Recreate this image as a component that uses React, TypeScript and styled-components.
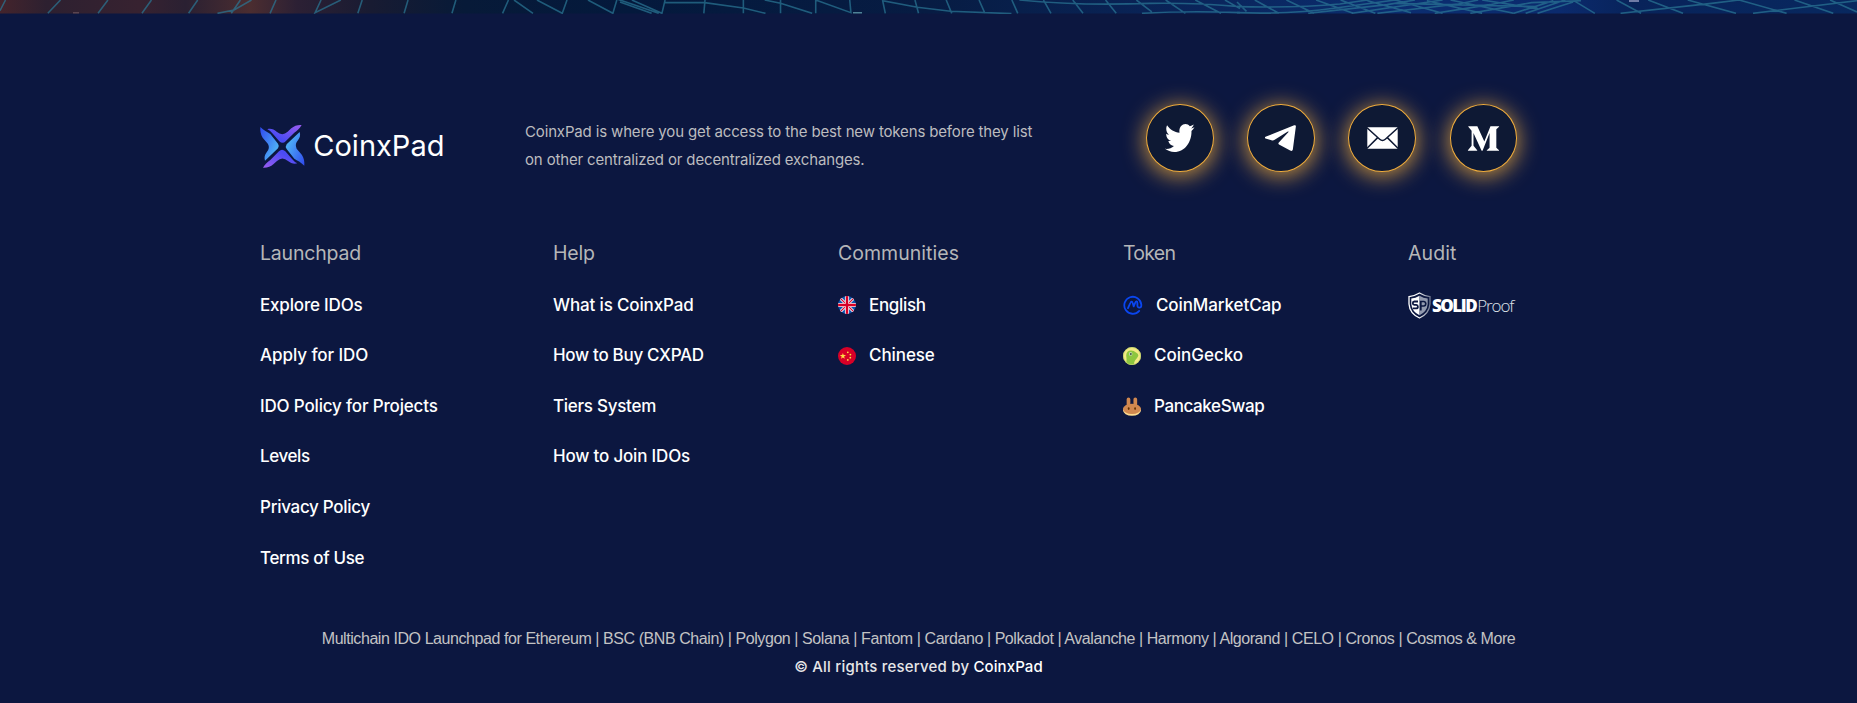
import React from 'react';
import styled, { createGlobalStyle } from 'styled-components';
import { FaMediumM } from 'react-icons/fa';

const GlobalStyle = createGlobalStyle`
  * { box-sizing: border-box; }
  body { margin: 0; background: #0c1740; color: #fff; font-family: Inter, "Liberation Sans", sans-serif; }
`;

const Page = styled.div`
  height: 703px;
  overflow: hidden;
  background: #0c1740;
`;

const HeroEdge = styled.div`
  height: 14px;
  svg { display: block; }
`;

const FooterBody = styled.footer`
  padding: 90px 0 0 260px;
`;

const TopRow = styled.div`
  display: flex;
  align-items: flex-start;
  height: 133.6px;
`;

const Brand = styled.a`
  display: flex;
  align-items: center;
  gap: 8px;
  width: 265px;
  margin-top: 20px;
  color: #fff;
  font-size: 29px;
  line-height: 44px;
`;

const Description = styled.p`
  width: 620px;
  margin: 14px 0 0;
  color: #bcbcbf;
  font-size: 15px;
  line-height: 28px;
  letter-spacing: -0.15px;
`;

const SocialList = styled.div`
  display: flex;
  gap: 33.6px;
  margin-left: 1px;
`;

const SocialButton = styled.a`
  display: flex;
  align-items: center;
  justify-content: center;
  width: 67.6px;
  height: 68px;
  border: 1px solid #efac3c;
  border-radius: 50%;
  background: #0e1934;
  color: #fff;
  box-shadow: 0 3px 22px 1px rgba(246, 176, 60, 0.8);
  svg { display: block; }
`;

const Columns = styled.div`
  display: grid;
  grid-template-columns: 293px 285px 285px 285px auto;
  height: 387px;
`;

const Column = styled.div`
  display: flex;
  flex-direction: column;
`;

const Heading = styled.h4<{ $track: number }>`
  margin: 0 0 12px;
  color: #b5b6b8;
  font-size: 19.5px;
  font-weight: 400;
  line-height: 30px;
  letter-spacing: ${(p) => p.$track}px;
`;

const FooterLink = styled.a<{ $track: number }>`
  display: flex;
  align-items: center;
  gap: 13px;
  height: 50.6px;
  padding-bottom: 0.6px;
  font-size: 17px;
  font-weight: 480;
  letter-spacing: ${(p) => p.$track}px;
  white-space: nowrap;
  svg { display: block; margin-top: 1.5px; }
`;

const AuditLogo = styled.a`
  display: flex;
  align-items: center;
  height: 50px;
  margin-top: 1px;
  font-family: "Open Sans", sans-serif;
  font-size: 17px;
  line-height: 26px;
  svg { display: block; margin-right: 1px; }
`;

const Solid = styled.span`
  font-weight: 800;
  letter-spacing: -1.5px;
  margin-right: 1px;
`;

const Proof = styled.span`
  font-weight: 300;
  letter-spacing: -1.1px;
  color: #dfe2ea;
`;

const Legal = styled.div`
  width: 1317px;
  text-align: center;
`;

const Chains = styled.p`
  margin: 0;
  color: #c3c3c4;
  font: 16px/28px "Liberation Sans", Arial, sans-serif;
  letter-spacing: -0.43px;
  white-space: nowrap;
`;

const Copyright = styled.p`
  margin: 0;
  color: #e6e6e8;
  font-size: 15px;
  font-weight: 460;
  line-height: 28px;
  letter-spacing: 0.2px;
  b { color: #fff; font-weight: 500; letter-spacing: 0.1px; }
`;

const GRID_LEFT =
  'M0,32L14,0M121,40L153,0M248,40L273,0M359,40L383,0M477,40L500,0M550,40L592,30L636,0M585,40L608,0M683,40L698,0M812,0L797,38L862,0M905,40L916,0M1022,40L1032,0M1143,40L1153,0M1271,40L1286,0M1300,0L1348,40M1358,0L1422,40L1434,0M1487,0L1550,40L1560,0';
const GRID_MID =
  'M0,6L80,40M-10,-4L98,40M30,0L106,40L114,0M114,8L214,8L312,24L368,40M215,0L212,40M312,0V40M406,0V40M366,0L406,10L486,40M495,40V0L584,38L581,0M664,0L671,40M664,2L752,22L836,34L990,41M746,0L755,40M825,0L839,40M908,0L923,40M991,0L1006,40M1010,0Q1160,18 1340,10Q1460,8 1568,20M1071,0L1090,40M1145,0L1171,40M1228,0L1255,40M1306,0L1345,36M1320,40Q1440,32 1568,38M1380,0L1430,40M1455,0L1520,40M1530,0L1568,26';
const GRID_RIGHT =
  'M0,20Q150,24 260,12L330,0M0,38Q130,44 250,24L400,0M45,0L106,40M0,6L24,34M125,0L195,40M200,0L294,40M262,0L350,40M180,40L380,14L450,0M290,40L520,0M355,40L560,12L610,0M330,2L440,38M400,0L520,40M480,2L620,40M400,10L760,20M540,0L700,40M500,40L640,14L700,0M590,40L745,8L870,2M620,0L760,26M700,40L800,2M730,40L830,0M760,40L850,6M855,4L905,40M960,0L1022,40M970,40L1200,10L1270,0M1040,0L1128,40M1140,0L1262,40M1270,0L1390,40M1305,40L1568,2M1410,0L1508,40M1500,0L1568,36';

const GridLine = styled.path`
  vector-effect: non-scaling-stroke;
`;

function HeroBackdrop() {
  return (
    <svg width="1857" height="14" viewBox="0 0 1857 14">
      <defs>
        <linearGradient id="sky">
          <stop offset="0" stopColor="#44242c" />
          <stop offset="0.025" stopColor="#2d2030" />
          <stop offset="0.075" stopColor="#372230" />
          <stop offset="0.1" stopColor="#2a2032" />
          <stop offset="0.135" stopColor="#4b2d30" />
          <stop offset="0.16" stopColor="#2c2034" />
          <stop offset="0.2" stopColor="#181b32" />
          <stop offset="0.25" stopColor="#071a38" />
          <stop offset="0.34" stopColor="#04193c" />
          <stop offset="0.5" stopColor="#071c43" />
          <stop offset="0.65" stopColor="#0a255b" />
          <stop offset="0.75" stopColor="#0b2d70" />
          <stop offset="0.84" stopColor="#0b2a6d" />
          <stop offset="0.88" stopColor="#08235a" />
          <stop offset="1" stopColor="#08285f" />
        </linearGradient>
      </defs>
      <rect width="1857" height="13.5" fill="url(#sky)" />
      <g fill="none" stroke="#2b7896" strokeWidth="1.6" opacity="0.7">
        {[GRID_LEFT, GRID_MID, GRID_RIGHT].map((d, i) => (
          <GridLine key={i} d={d} transform={`translate(${[0, 620, 1237][i]} 0) scale(.3954 .333)`} />
        ))}
      </g>
      <rect x="73" y="12" width="6" height="1.5" fill="#5b4550" />
      <rect x="853" y="12" width="9" height="1.5" fill="#4f8296" />
      <rect x="1629" y="0" width="10" height="2" fill="#6f7ba6" />
    </svg>
  );
}

function LogoMark() {
  const crest =
    'M51 89C61 85 71 90 79 96Q96 111 112 96L123 86Q135 75 154 76C148 87 140 93 132 99L106 125Q97 134 87 125L66 101Q59 92 51 89Z';
  const wing =
    'M30 82C40 93 51 97 60 103L83 132Q88 139 83 146L44 183C41 173 43 166 49 158Q60 146 53 133L37 114C31 104 29 94 30 82Z';
  return (
    <svg width="45.3" height="44.3" viewBox="29 73 136 133">
      <defs>
        <linearGradient id="crest" x1="0" y1="1" x2="1" y2="0">
          <stop offset="0.3" stopColor="#4a4bf4" />
          <stop offset="1" stopColor="#9b5cf0" />
        </linearGradient>
        <linearGradient id="wing" x1="0" y1="0" x2="0.8" y2="0.7">
          <stop offset="0" stopColor="#3049ee" />
          <stop offset="1" stopColor="#4cabf5" />
        </linearGradient>
      </defs>
      {[0, 180].map((turn) => (
        <g key={turn} transform={`rotate(${turn} 96 140)`}>
          <path d={crest} fill="url(#crest)" />
          <path d={wing} fill="url(#wing)" />
        </g>
      ))}
    </svg>
  );
}

function Bird() {
  return (
    <svg width="29.5" height="28" viewBox="0 48 512 416" preserveAspectRatio="none" fill="currentColor">
      <path d="M459.37 151.716c.325 4.548.325 9.097.325 13.645 0 138.72-105.583 298.558-298.558 298.558-59.452 0-114.68-17.219-161.137-47.106 8.447.974 16.568 1.299 25.34 1.299 49.055 0 94.213-16.568 130.274-44.832-46.132-.975-84.792-31.188-98.112-72.772 6.498.974 12.995 1.624 19.818 1.624 9.421 0 18.843-1.3 27.614-3.573-48.081-9.747-84.143-51.98-84.143-102.985v-1.299c13.969 7.797 30.214 12.67 47.431 13.319-28.264-18.843-46.781-51.005-46.781-87.391 0-19.492 5.197-37.36 14.294-52.954 51.655 63.675 129.3 105.258 216.365 109.807-1.624-7.797-2.599-15.918-2.599-24.04 0-57.828 46.782-104.934 104.934-104.934 30.213 0 57.502 12.67 76.67 33.137 23.715-4.548 46.456-13.32 66.599-25.34-7.798 24.366-24.366 44.833-46.132 57.827 21.117-2.273 41.584-8.122 60.426-16.243-14.292 20.791-32.161 39.308-52.628 54.253z" />
    </svg>
  );
}

function PaperPlane() {
  return (
    <svg width="31" height="26" viewBox="347 39 93 78" fill="currentColor">
      <path d="M348.500 74.500 434.500 40Q440.500 38 439.500 44L430.500 112.500Q429 119.500 422.500 115.500L389 97.500Q385.500 95 388.500 91.500L417.500 60Q418.500 57.500 415.500 58.500L376 83.500Q371.500 86.500 366.500 85L348.500 79.500Q345 77 348.500 74.500Z" />
    </svg>
  );
}

function Envelope() {
  return (
    <svg width="31" height="22" viewBox="0 0 31 22">
      <rect x="0.3" y="0.3" width="30.4" height="21.4" rx="0.8" fill="#fff" />
      <path d="M0 .8 12.7 12.2Q15.5 14.7 18.3 12.2L31 .8M0 21.2 10.7 10.6M31 21.2 20.3 10.6" fill="none" stroke="#0e1934" strokeWidth="1.5" />
    </svg>
  );
}

function FlagUK() {
  return (
    <svg width="18" height="18" viewBox="0 0 18 18">
      <clipPath id="uk"><circle cx="9" cy="9" r="9" /></clipPath>
      <g clipPath="url(#uk)">
        <rect width="18" height="18" fill="#0b52b0" />
        <path d="M0 0 18 18M18 0 0 18" stroke="#f0f0f0" strokeWidth="3" />
        <path d="M0 0 18 18M18 0 0 18" stroke="#d80027" strokeWidth="1.1" />
        <path d="M9 0V18M0 9H18" stroke="#f0f0f0" strokeWidth="4.2" />
        <path d="M9 0V18M0 9H18" stroke="#d80027" strokeWidth="2.4" />
      </g>
    </svg>
  );
}

function FlagChina() {
  return (
    <svg width="18" height="18" viewBox="0 0 18 18">
      <circle cx="9" cy="9" r="9" fill="#d80027" />
      <path d="M4.9 5.9 5.65 8.1H8L6.1 9.5 6.8 11.8 4.9 10.4 3 11.8 3.7 9.5 1.8 8.1H4.15Z" fill="#ffda44" />
      <g fill="#ffda44">
        <circle cx="9.8" cy="5.3" r="0.9" />
        <circle cx="12.4" cy="7.6" r="0.9" />
        <circle cx="12.3" cy="10.7" r="0.9" />
        <circle cx="9.8" cy="12.9" r="0.9" />
      </g>
    </svg>
  );
}

function CoinMarketCapIcon() {
  return (
    <svg width="20" height="20" viewBox="0 0 20 20" fill="none" stroke="#0a46f0" strokeWidth="1.8" strokeLinecap="round" strokeLinejoin="round">
      <path d="M16.2 15.9A8.5 8.5 0 1 1 18.3 9.6V10.4C18.3 13.2 14.4 13.5 14.4 10.6V8.2C14.4 6.1 13 5.9 12.3 7.5L10.7 11.4 9.7 8.1C9.2 6.2 8 6.3 7.3 8L5 13.1" />
    </svg>
  );
}

function CoinGeckoIcon() {
  return (
    <svg width="18" height="18" viewBox="0 0 18 18">
      <circle cx="9" cy="9" r="9" fill="#f3ea83" />
      <path d="M3.3 16Q3.8 12 3.2 8.500Q3.5 3.6 8 3.6Q11 3.7 13 5.5Q15.8 7 15.2 9Q14 11.500 12 13.5Q11 15 11 17.3Q7 18.600 3.3 16Z" fill="#8dc63f" />
      <circle cx="7.6" cy="6.9" r="1.7" fill="#fff" />
      <circle cx="7.7" cy="7" r="1.2" fill="#4d6a50" />
      <circle cx="9" cy="9" r="8.6" fill="none" stroke="#b9cf66" strokeWidth="0.7" />
    </svg>
  );
}

function PancakeIcon() {
  return (
    <svg width="18" height="19" viewBox="0 0 18 19">
      <ellipse cx="9" cy="13.2" rx="9" ry="5.6" fill="#fedc90" />
      <ellipse cx="9" cy="11.9" rx="9" ry="5.2" fill="#d1884f" />
      <path d="M5.5 9V2.3M12.3 9V2.3" stroke="#d1884f" strokeWidth="3.7" strokeLinecap="round" />
      <ellipse cx="5.7" cy="11.6" rx="0.9" ry="1.4" fill="#633001" />
      <ellipse cx="12.1" cy="11.6" rx="0.9" ry="1.4" fill="#633001" />
    </svg>
  );
}

function Shield() {
  return (
    <svg width="23" height="27" viewBox="0 0 23 27">
      <defs>
        <linearGradient id="shield">
          <stop offset="0.45" stopColor="#fff" />
          <stop offset="1" stopColor="#707891" />
        </linearGradient>
      </defs>
      <path d="M11.5 1Q6 4.3 1 4.6V12Q1.6 21.5 11.5 26Q21.4 21.5 22 12V4.6Q17 4.3 11.5 1Z" fill="none" stroke="url(#shield)" strokeWidth="1.3" />
      <path d="M11.5 3.8V23.2Q3.9 19.6 3.3 12V6.6Q7.5 6.2 11.5 3.8Z" fill="#fff" />
      <path d="M11.5 3.8V23.2Q19.1 19.6 19.7 12V6.6Q15.5 6.2 11.5 3.8Z" fill="#9299ae" />
      <path d="M10 9.5H6.3Q4.8 9.7 4.8 11.2T6.4 12.8H8.2Q9.9 13 9.9 14.7T8.2 16.4H4.6" fill="none" stroke="#0c1740" strokeWidth="1.8" />
      <path d="M12.8 18.5V9.5H16Q17.8 9.8 17.8 11.7T16 14H13" fill="none" stroke="#0c1740" strokeWidth="1.7" />
    </svg>
  );
}

type LinkItem = { label: string; track: number; icon?: React.ReactNode };
type LinkGroup = { title: string; track: number; links: LinkItem[] };

const groups: LinkGroup[] = [
  {
    title: 'Launchpad', track: -0.2,
    links: [
      { label: 'Explore IDOs', track: -0.18 },
      { label: 'Apply for IDO', track: -0.06 },
      { label: 'IDO Policy for Projects', track: -0.17 },
      { label: 'Levels', track: -0.4 },
      { label: 'Privacy Policy', track: -0.28 },
      { label: 'Terms of Use', track: -0.34 },
    ],
  },
  {
    title: 'Help', track: -0.2,
    links: [
      { label: 'What is CoinxPad', track: -0.15 },
      { label: 'How to Buy CXPAD', track: -0.3 },
      { label: 'Tiers System', track: -0.27 },
      { label: 'How to Join IDOs', track: -0.18 },
    ],
  },
  {
    title: 'Communities', track: 0.03,
    links: [
      { label: 'English', track: -0.34, icon: <FlagUK /> },
      { label: 'Chinese', track: -0.08, icon: <FlagChina /> },
    ],
  },
  {
    title: 'Token', track: -0.75,
    links: [
      { label: 'CoinMarketCap', track: -0.1, icon: <CoinMarketCapIcon /> },
      { label: 'CoinGecko', track: 0, icon: <CoinGeckoIcon /> },
      { label: 'PancakeSwap', track: -0.4, icon: <PancakeIcon /> },
    ],
  },
];

export default function App() {
  return (
    <Page>
      <GlobalStyle />
      <HeroEdge><HeroBackdrop /></HeroEdge>
      <FooterBody>
        <TopRow>
          <Brand><LogoMark />CoinxPad</Brand>
          <Description>
            CoinxPad is where you get access to the best new tokens before they list
            <br />
            on other centralized or decentralized exchanges.
          </Description>
          <SocialList>
            <SocialButton><Bird /></SocialButton>
            <SocialButton><PaperPlane /></SocialButton>
            <SocialButton><Envelope /></SocialButton>
            <SocialButton><FaMediumM size={33} /></SocialButton>
          </SocialList>
        </TopRow>
        <Columns>
          {groups.map((group) => (
            <Column key={group.title}>
              <Heading $track={group.track}>{group.title}</Heading>
              {group.links.map((link) => (
                <FooterLink key={link.label} $track={link.track}>{link.icon}<span>{link.label}</span></FooterLink>
              ))}
            </Column>
          ))}
          <Column>
            <Heading $track={0.1}>Audit</Heading>
            <AuditLogo><Shield /><Solid>SOLID</Solid><Proof>Proof</Proof></AuditLogo>
          </Column>
        </Columns>
        <Legal>
          <Chains>
            Multichain IDO Launchpad for Ethereum | BSC (BNB Chain) | Polygon | Solana | Fantom | Cardano | Polkadot | Avalanche | Harmony | Algorand | CELO | Cronos | Cosmos &amp; More
          </Chains>
          <Copyright>© All rights reserved by <b>CoinxPad</b></Copyright>
        </Legal>
      </FooterBody>
    </Page>
  );
}
